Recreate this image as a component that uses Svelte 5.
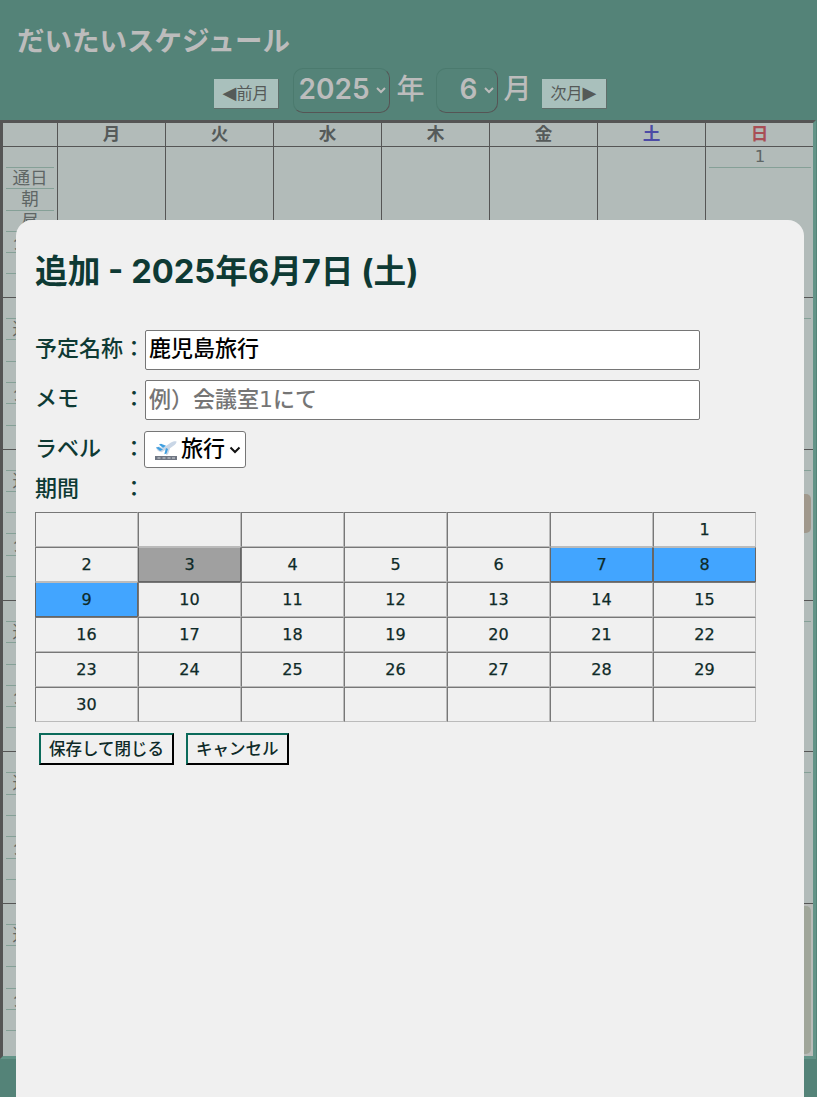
<script>
  const dayNames = [
    { t: '月', c: '' }, { t: '火', c: '' }, { t: '水', c: '' }, { t: '木', c: '' },
    { t: '金', c: '' }, { t: '土', c: 'sat' }, { t: '日', c: 'sun' }
  ];
  const slots = ['通日', '朝', '昼', '夕方', '', ''];
  const weeks = [
    ['', '', '', '', '', '', 1],
    [2, 3, 4, 5, 6, 7, 8],
    [9, 10, 11, 12, 13, 14, 15],
    [16, 17, 18, 19, 20, 21, 22],
    [23, 24, 25, 26, 27, 28, 29],
    [30, '', '', '', '', '', '']
  ];
  const range = [7, 8, 9];
</script>

<div class="page">
  <header class="top">
    <h1>だいたいスケジュール</h1>
    <div class="nav">
      <button class="month-btn prev"><span class="tri">◀</span>前月</button>
      <select class="ym year"><option>2025</option></select>
      <span class="unit">年</span>
      <select class="ym month"><option>6</option></select>
      <span class="unit">月</span>
      <button class="month-btn next">次月<span class="tri">▶</span></button>
    </div>
  </header>

  <div class="calendar">
    <div class="head-row">
      <div class="corner"></div>
      {#each dayNames as d}
        <div class="head-cell {d.c}">{d.t}</div>
      {/each}
    </div>
    {#each weeks as w, wi}
      <div class="week" class:first={wi === 0}>
        <div class="slot-col">
          <div class="slot blank"></div>
          {#each slots as s}
            <div class="slot">{s}</div>
          {/each}
        </div>
        {#each w as d}
          <div class="day">
            {#if d !== '' && wi < 5}
              <div class="day-num">{d}</div>
            {/if}
          </div>
        {/each}
      </div>
    {/each}
    <div class="thumb thumb-a"></div>
    <div class="track"><div class="thumb-b"></div></div>
  </div>

  <section class="modal">
    <h2>追加 - 2025年6月7日 (土)</h2>
    <div class="form">
      <div class="row r1">
        <span class="lbl">予定名称</span><span class="colon">：</span>
        <input class="text filled" value="鹿児島旅行" />
      </div>
      <div class="row r2">
        <span class="lbl">メモ</span><span class="colon">：</span>
        <input class="text empty" placeholder="例）会議室1にて" />
      </div>
      <div class="row r3">
        <span class="lbl">ラベル</span><span class="colon">：</span>
        <div class="label-select">
          <svg width="26" height="24" viewBox="0 0 26 24" aria-hidden="true">
            <rect x="2" y="18" width="22" height="4" fill="#6f7683" />
            <path d="M4.5 20h3M9.5 20h3M14.5 20h3M19 20h3" stroke="#d5d8dc" stroke-width="1" />
            <path d="M3 9.5 6 8.5l4 1.5 8-5.5c2-1.200 5-1.700 5.500-1 .4.800-1 3-3 4.300l-3.500 2.500-2 6-2 .7-.5-5.200-4 2.500-3.500-1.300-2-3z" fill="#c9d6e6" />
            <path d="M3 9.500 7 13l3-1.500L5.500 9z" fill="#3f9fe0" />
            <path d="M10 10 6 6.500l2-.7 5 2z" fill="#3f9fe0" />
            <path d="M11.500 15.500 13 10l2 1-1.500 4.500-2 .7z" fill="#3f9fe0" />
          </svg>
          <span class="sel-text">旅行</span>
          <svg class="chev" width="12" height="8" viewBox="0 0 12 8" aria-hidden="true">
            <path d="M1.500 1.500 6 6l4.500-4.500" fill="none" stroke="#111" stroke-width="2" />
          </svg>
        </div>
      </div>
      <div class="row r4">
        <span class="lbl">期間</span><span class="colon">：</span>
      </div>
    </div>

    <div class="picker">
      {#each weeks as w}
        {#each w as d}
          <div class="pick" class:today={d === 3} class:sel={range.includes(d)}>{d}</div>
        {/each}
      {/each}
    </div>

    <div class="actions">
      <button class="act">保存して閉じる</button>
      <button class="act">キャンセル</button>
    </div>
  </section>
</div>

<style>
  :global(body) {
    margin: 0;
    background: #548378;
  }
  .page {
    position: relative;
    height: 1097px;
    overflow: hidden;
    background: #548378;
    font-family: Inter, "Noto Sans CJK JP", sans-serif;
  }
  .top {
    height: 120px;
    box-sizing: border-box;
    padding-top: 22px;
  }
  h1 {
    margin: 0 0 0 17px;
    font-size: 27.5px;
    line-height: 38px;
    font-weight: 700;
    color: #bcbcbc;
  }
  .nav {
    display: flex;
    align-items: center;
    justify-content: center;
    margin-top: 8px;
    height: 45px;
    margin-left: 3px;
  }
  .month-btn {
    box-sizing: border-box;
    width: 65px;
    height: 30px;
    padding: 0 0 2px;
    font-family: inherit;
    font-size: 16px;
    line-height: 26px;
    color: #555a58;
    background: #a9c0bc;
    border: 0;
    border-right: 1px solid #5f6e6a;
    border-bottom: 1px solid #5f6e6a;
    margin-top: 7px;
    white-space: nowrap;
  }
  .month-btn.prev { margin-left: 1px; margin-right: -1px; }
  .month-btn.next { margin-left: -1px; margin-right: 1px; }
  .tri {
    font-family: "DejaVu Sans", sans-serif;
    font-size: 18px;
    line-height: 20px;
  }
  .ym {
    box-sizing: border-box;
    height: 45px;
    padding: 0 3px 4px 0;
    font-family: inherit;
    font-size: 28px;
    font-weight: 600;
    color: #bcbcbc;
    background: transparent;
    border: 1px solid #4b7a6e;
    border-bottom-color: #555;
    border-right-color: #555;
    border-radius: 10px;
    text-align: right;
  }
  .year { width: 97px; margin-left: 15px; }
  .month { width: 62px; margin-left: 11px; }
  .unit {
    box-sizing: border-box;
    font-size: 28px;
    line-height: 40px;
    height: 44px;
    padding-bottom: 4px;
    font-weight: 500;
    color: #bcbcbc;
    margin-left: 7px;
    width: 28px;
  }
  .unit + .month { margin-left: 11px; }
  .month + .unit { margin-left: 6px; margin-right: 11px; }

  .calendar {
    position: relative;
    box-sizing: border-box;
    width: 816px;
    height: 939px;
    border-style: solid;
    border-width: 3px;
    border-color: #555 #639488 #639488 #555;
    background: #b2bbb9;
    overflow: hidden;
  }
  .head-row {
    display: grid;
    grid-template-columns: 54px repeat(7, 108px);
    height: 24px;
    box-sizing: border-box;
    border-bottom: 1px solid #555;
  }
  .head-cell {
    box-sizing: border-box;
    border-left: 1px solid #555;
    text-align: center;
    font-size: 17.6px;
    line-height: 21px;
    font-weight: 700;
    color: #555a5a;
  }
  .sat { color: #4c4ba5; }
  .sun { color: #a84e55; }
  .week {
    display: grid;
    grid-template-columns: 54px repeat(7, 108px);
    height: 151.45px;
    box-sizing: border-box;
    border-top: 1px solid #555;
  }
  .week.first { border-top: 0; height: 150.100px; }
  .slot-col {
    padding: 0 3px;
    overflow: hidden;
  }
  .slot {
    box-sizing: border-box;
    height: 21.300px;
    border-top: 1px solid #85a097;
    font-size: 17.6px;
    line-height: 20px;
    text-align: center;
    color: #5f6665;
    white-space: nowrap;
    overflow: hidden;
  }
  .slot.blank {
    height: 20px;
    border-top: 0;
  }
  .day {
    box-sizing: border-box;
    border-left: 1px solid #555;
    padding: 0 2px 0 3px;
  }
  .day-num {
    box-sizing: border-box;
    height: 21px;
    border-bottom: 1px solid #85a097;
    text-align: center;
    font-family: "DejaVu Sans", sans-serif;
    font-size: 16.5px;
    line-height: 20px;
    color: #5f6665;
  }
  .thumb {
    position: absolute;
    left: 801px;
    top: 371px;
    width: 7px;
    height: 39px;
    border-radius: 0 5px 5px 0;
    background: #a0988c;
  }
  .track {
    position: absolute;
    left: 801px;
    top: 781px;
    width: 9px;
    height: 152px;
    background: #b9bcb9;
  }
  .thumb-b {
    margin-top: 2px;
    width: 7px;
    height: 148px;
    border-radius: 0 5px 5px 0;
    background: #a0a69a;
  }

  .modal {
    position: absolute;
    left: 16px;
    top: 220px;
    width: 788px;
    height: 900px;
    box-sizing: border-box;
    padding: 0 0 0 20px;
    background: #f0f0f0;
    border-radius: 16px;
    color: #0e3a34;
  }
  h2 {
    margin: 0 0 0 -1px;
    padding-top: 28px;
    font-size: 32.7px;
    line-height: 46px;
    font-weight: 700;
    color: #0e3a34;
  }
  .form { margin-top: 36px; }
  .row {
    display: flex;
    align-items: center;
    font-size: 22px;
    font-weight: 500;
    color: #0e3a34;
  }
  .lbl {
    width: 88px;
    margin-left: -1px;
    padding-bottom: 8px;
    white-space: nowrap;
  }
  .colon {
    width: 22px;
    padding-bottom: 8px;
    text-align: left;
  }
  .r1, .r2 { height: 40px; margin-bottom: 10px; }
  .r3 { height: 37px; margin-top: 11px; margin-bottom: 3px; }
  .r4 { height: 37px; }
  .text {
    box-sizing: border-box;
    width: 555px;
    height: 40px;
    font-family: "DejaVu Sans", "Noto Sans CJK JP", sans-serif;
    font-size: 22px;
    font-weight: 500;
    color: #000;
    background: #fff;
    border: 1px solid #767676;
    border-radius: 2px;
    outline: none;
  }
  .filled { padding: 0 3px 9px; }
  .empty { padding: 0 3px 1px; }
  .text::placeholder { color: #757575; }
  .label-select {
    box-sizing: border-box;
    display: flex;
    align-items: center;
    width: 102px;
    height: 37px;
    margin-left: -1px;
    padding-left: 8px;
    background: #fff;
    border: 1px solid #767676;
    border-radius: 3px;
    color: #000;
    font-size: 22px;
  }
  .sel-text { margin-left: 2px; padding-bottom: 7px; }
  .chev { margin-left: 4px; }
  .picker {
    display: grid;
    grid-template-columns: repeat(7, 103px);
    grid-auto-rows: 35px;
    margin-top: 4px;
    margin-left: -1px;
    width: 721px;
  }
  .pick {
    box-sizing: border-box;
    border-style: solid;
    border-width: 1px;
    border-color: #777 #bbb #bbb #777;
    background: #f0f0f0;
    text-align: center;
    font-family: "DejaVu Sans", sans-serif;
    font-size: 16px;
    line-height: 33px;
    -webkit-text-stroke: 0.25px #0e2a28;
    color: #0e2a28;
  }
  .today {
    background: #a0a0a0;
    border-color: #bbb #666 #666 #666;
  }
  .sel {
    background: #42a5ff;
    border-color: #bbb #666 #666 #666;
  }
  .actions {
    display: flex;
    gap: 12px;
    margin-top: 11px;
    margin-left: 3px;
  }
  .act {
    box-sizing: border-box;
    height: 32px;
    padding: 0 8px;
    font-family: inherit;
    font-size: 16.5px;
    font-weight: 500;
    line-height: 26px;
    color: #0e2a28;
    background: #f0f0f0;
    border-style: solid;
    border-width: 2px;
    border-color: #0b6b5b #000 #000 #0b6b5b;
    white-space: nowrap;
  }
</style>
